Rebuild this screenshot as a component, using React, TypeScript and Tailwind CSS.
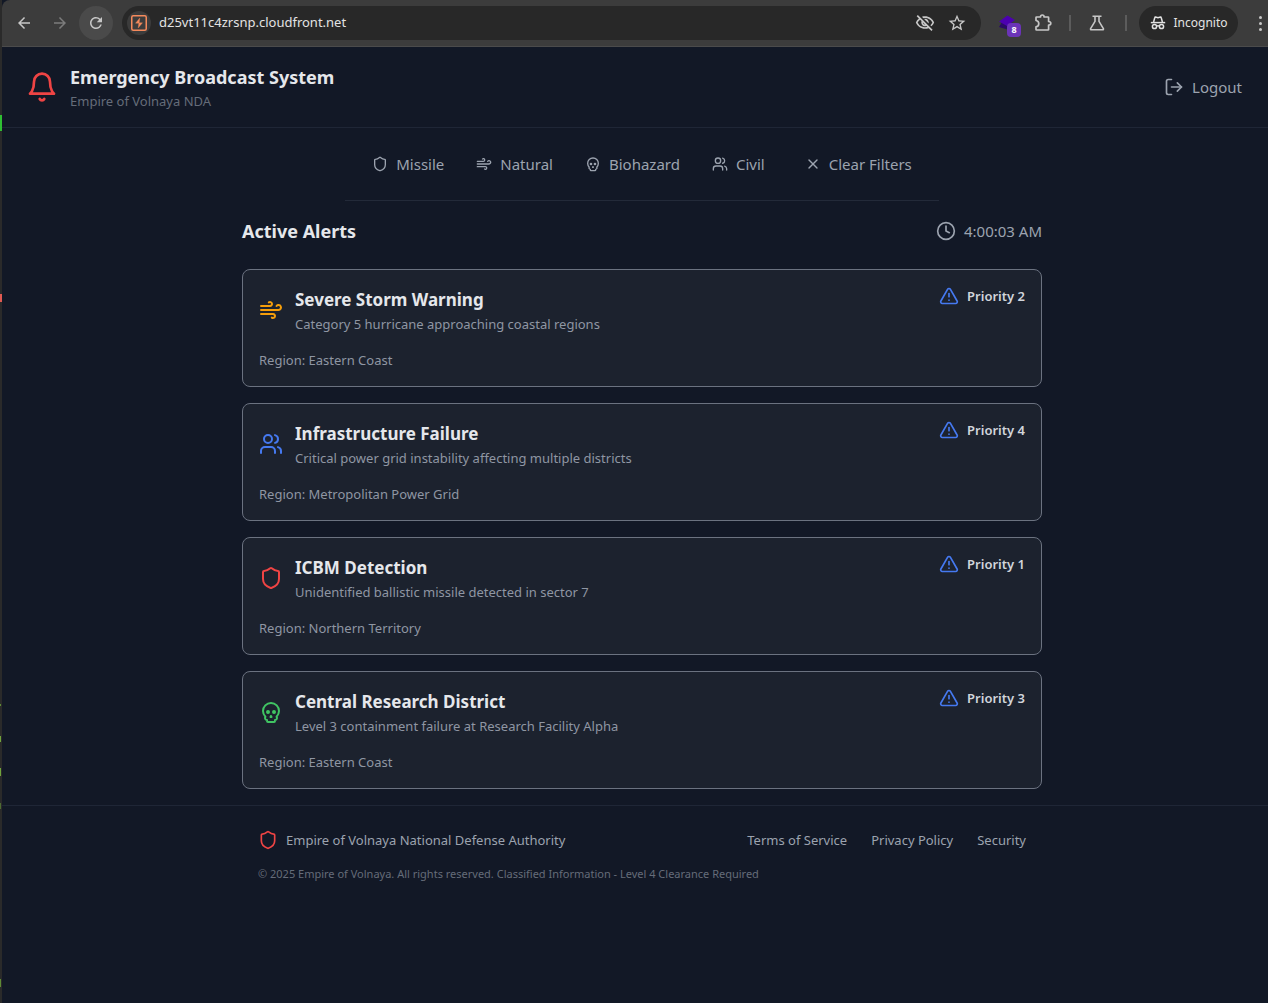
import type { ComponentType, ReactNode } from 'react'
import { Clock, LogOut, Shield, Skull, TriangleAlert, Users, Wind, X } from 'lucide-react'
import { MdArrowBack, MdArrowForward, MdOutlineVisibilityOff, MdRefresh, MdStarBorder } from 'react-icons/md'

type Icon = ComponentType<{ className?: string }>

const filters: { label: string; icon: Icon }[] = [
  { label: 'Missile', icon: Shield },
  { label: 'Natural', icon: Wind },
  { label: 'Biohazard', icon: Skull },
  { label: 'Civil', icon: Users },
]

const alerts: { title: string; text: string; region: string; priority: number; icon: Icon; color: string }[] = [
  {
    title: 'Severe Storm Warning',
    text: 'Category 5 hurricane approaching coastal regions',
    region: 'Eastern Coast',
    priority: 2,
    icon: Wind,
    color: 'text-[#f59e0b]',
  },
  {
    title: 'Infrastructure Failure',
    text: 'Critical power grid instability affecting multiple districts',
    region: 'Metropolitan Power Grid',
    priority: 4,
    icon: Users,
    color: 'text-[#4579f0]',
  },
  {
    title: 'ICBM Detection',
    text: 'Unidentified ballistic missile detected in sector 7',
    region: 'Northern Territory',
    priority: 1,
    icon: Shield,
    color: 'text-[#ef4444]',
  },
  {
    title: 'Central Research District',
    text: 'Level 3 containment failure at Research Facility Alpha',
    region: 'Eastern Coast',
    priority: 3,
    icon: Skull,
    color: 'text-[#40c463]',
  },
]

function BellIcon({ className }: { className?: string }) {
  return (
    <svg className={className} viewBox="0 0 24 24" fill="none" stroke="currentColor" strokeWidth="2" strokeLinecap="round" strokeLinejoin="round" aria-hidden="true">
      <path d="M6 8a6 6 0 0 1 12 0c0 7 3 9 3 9H3s3-2 3-9" />
      <path d="M10.3 21a1.94 1.94 0 0 0 3.4 0" />
    </svg>
  )
}

function SiteIcon() {
  return (
    <svg className="size-4" viewBox="0 0 16 16" fill="none" stroke="#f58a5c" aria-hidden="true">
      <rect x="0.75" y="0.75" width="14.5" height="14.5" rx="1.5" strokeWidth="1.5" />
      <path d="M8.800 3 4.500 8.200H7.800L7.200 13 11.500 7.800H8.200Z" fill="#f58a5c" strokeWidth="0.3" />
    </svg>
  )
}

function PuzzleIcon() {
  return (
    <svg className="size-5" viewBox="0 0 20 20" fill="none" stroke="currentColor" strokeWidth="1.7" strokeLinejoin="round" aria-hidden="true">
      <path d="M3 7.5V4.6Q3 4 3.6 4H7.500Q7.500 2 9.300 2T11.100 4H15Q15.600 4 15.600 4.600V8.500Q17.800 8.500 17.800 10.300T15.600 12.100V16.400Q15.600 17 15 17H3.600Q3 17 3 16.400V13.800Q5.800 13.400 5.800 10.700T3 7.500Z" />
    </svg>
  )
}

function FlaskIcon() {
  return (
    <svg className="size-5" viewBox="0 0 20 20" fill="none" stroke="currentColor" strokeWidth="1.6" strokeLinejoin="round" aria-hidden="true">
      <path d="M5.500 3.200h9M8 3.200v5.200L3.600 15.600Q3.200 16.700 4.400 16.700H15.600Q16.800 16.700 16.400 15.600L12 8.400V3.200" />
    </svg>
  )
}

function IncognitoIcon() {
  return (
    <svg className="size-4" viewBox="0 0 16 16" fill="none" stroke="currentColor" strokeWidth="1.500" aria-hidden="true">
      <path d="M0.800 7.600H15.200" />
      <path d="M3.600 7 4.900 2.300Q5 1.900 5.500 2L8 2.700 10.500 2Q11 1.900 11.100 2.300L12.400 7" />
      <circle cx="4.500" cy="11.500" r="2.100" />
      <circle cx="11.500" cy="11.500" r="2.100" />
      <path d="M6.600 11.200Q8 10.400 9.400 11.200" />
    </svg>
  )
}

function BarButton({ label, children }: { label: string; children: ReactNode }) {
  return (
    <button type="button" aria-label={label} className="flex h-9 w-9 shrink-0 items-center justify-center">
      {children}
    </button>
  )
}

function BrowserBar() {
  return (
    <div className="flex h-[47px] items-center rounded-tl-lg border-b border-[#4b4b4b] bg-[#3c3c3c] pl-1 pr-1 text-[#c7c7c7]">
      <BarButton label="Back">
        <MdArrowBack className="size-[18px]" />
      </BarButton>
      <BarButton label="Forward">
        <MdArrowForward className="size-[18px] text-[#7c7c7c]" />
      </BarButton>
      <button type="button" aria-label="Reload" className="ml-px flex size-[34px] shrink-0 items-center justify-center rounded-full bg-[#4a4a4a]">
        <MdRefresh className="size-[18px]" />
      </button>
      <div className="ml-[9px] flex h-[34px] min-w-0 flex-1 items-center rounded-full bg-[#282828] pl-[5px] pr-2">
        <span className="flex size-6 shrink-0 items-center justify-center rounded-full bg-[#3c3c3c]">
          <SiteIcon />
        </span>
        <input
          type="text"
          aria-label="Address"
          defaultValue="d25vt11c4zrsnp.cloudfront.net"
          className="ml-2 min-w-0 flex-1 bg-transparent text-[13px] text-[#e3e3e3] outline-none"
        />
        <button type="button" aria-label="Tracking protection" className="flex w-8 shrink-0 justify-center">
          <MdOutlineVisibilityOff className="size-5" />
        </button>
        <button type="button" aria-label="Bookmark" className="flex w-8 shrink-0 justify-center">
          <MdStarBorder className="size-5" />
        </button>
      </div>
      <button type="button" aria-label="Extension, 8 items" className="relative ml-2 flex h-9 w-9 shrink-0 items-center justify-center">
        <svg className="size-4" viewBox="0 0 16 16" aria-hidden="true">
          <path d="M0 12 3 7l12 1-5 7Z" fill="#2a0a66" />
          <path d="M0 6.500 8.500 0.500 16 5 8 11Z" fill="#4c00b0" />
        </svg>
        <span className="absolute bottom-1 right-1 flex size-3.5 items-center justify-center rounded bg-[#6b34b8] text-[9px] font-bold text-white">8</span>
      </button>
      <BarButton label="Extensions">
        <PuzzleIcon />
      </BarButton>
      <span className="mx-2 h-4 w-0.5 shrink-0 bg-[#5c5c5c]" />
      <BarButton label="Labs">
        <FlaskIcon />
      </BarButton>
      <span className="ml-2.5 mr-3 h-4 w-0.5 shrink-0 bg-[#5c5c5c]" />
      <button type="button" className="flex h-[34px] w-[99px] shrink-0 items-center justify-center gap-2 rounded-full bg-[#282828] text-xs text-[#e3e3e3]">
        <IncognitoIcon />
        Incognito
      </button>
      <button type="button" aria-label="Menu" className="ml-1 flex h-9 w-9 shrink-0 flex-col items-center justify-center gap-[3px]">
        <span className="size-[3px] rounded-full bg-current" />
        <span className="size-[3px] rounded-full bg-current" />
        <span className="size-[3px] rounded-full bg-current" />
      </button>
    </div>
  )
}

function EditorEdge() {
  return (
    <div className="flex w-0.5 shrink-0 flex-col bg-[#2a2a2a]" aria-hidden="true">
      <span className="mt-[115px] h-4 bg-[#2fbf33]" />
      <span className="mt-[163px] h-2 bg-[#e05a52]" />
      <span className="mt-[402px] h-0.5 w-px bg-[#5d8a35]" />
      <span className="mt-[30px] h-1.5 w-px bg-[#6fa33c]" />
      <span className="mt-[26px] h-2 w-px bg-[#6fa33c]" />
      <span className="mt-[27px] h-1.5 w-px bg-[#4d6b33]" />
      <span className="mt-[170px] h-2 w-px bg-[#5d8a35]" />
    </div>
  )
}

export default function App() {
  return (
    <div className="flex min-h-screen overflow-hidden bg-[#121826] font-['Noto_Sans',sans-serif]">
      <EditorEdge />
      <div className="-mr-3.5 min-w-0 flex-1">
        <BrowserBar />

        <header className="flex items-center justify-between border-b border-[#1f2636] px-6 py-4">
          <div className="flex items-center gap-3">
            <BellIcon className="size-8 text-[#ef4444]" />
            <div>
              <h1 className="text-lg leading-7 font-bold text-[#e5e7eb]">Emergency Broadcast System</h1>
              <p className="text-[13px] leading-5 text-[#656c79]">Empire of Volnaya NDA</p>
            </div>
          </div>
          <button type="button" className="flex items-center gap-2 px-4 py-2 text-[15px] leading-6 text-[#9ca3af]">
            <LogOut className="size-5" />
            Logout
          </button>
        </header>

        <nav className="mx-auto flex w-[594px] items-center justify-center border-b border-[#232a39] py-4 text-[15px] leading-6 text-[#9ca3af]">
          {filters.map(({ label, icon: FilterIcon }) => (
            <button key={label} type="button" className="flex items-center gap-2 px-4 py-2">
              <FilterIcon className="size-4" />
              {label}
            </button>
          ))}
          <button type="button" className="ml-2 flex items-center gap-2 px-4 py-2">
            <X className="size-4" />
            Clear Filters
          </button>
        </nav>

        <main className="mx-auto max-w-[832px] p-4">
          <div className="mb-6 flex items-center justify-between">
            <h2 className="text-lg leading-7 font-bold text-[#e5e7eb]">Active Alerts</h2>
            <div className="flex items-center gap-2 text-[15px] leading-6 text-[#9ca3af]">
              <Clock className="size-5" />
              4:00:03 AM
            </div>
          </div>
          <div className="flex flex-col gap-4">
            {alerts.map(({ title, text, region, priority, icon: AlertIcon, color }) => (
              <article key={title} className="rounded-lg border border-[#6b7280] bg-[#1c222e] p-4">
                <div className="flex items-start justify-between">
                  <div className="flex items-center gap-3">
                    <AlertIcon className={`size-6 ${color}`} />
                    <div>
                      <h3 className="text-[17px] leading-7 font-bold text-[#e5e7eb]">{title}</h3>
                      <p className="text-[13px] leading-5 text-[#8f96a3]">{text}</p>
                    </div>
                  </div>
                  <div className="flex items-center gap-2 text-[13px] leading-5 font-semibold text-[#d1d5db]">
                    <TriangleAlert className="size-5 text-[#4579f0]" />
                    Priority {priority}
                  </div>
                </div>
                <p className="mt-4 text-[13px] leading-5 text-[#8f96a3]">Region: {region}</p>
              </article>
            ))}
          </div>
        </main>

        <footer className="border-t border-[#1f2636] py-6">
          <div className="mx-auto max-w-[800px] px-4">
            <div className="flex items-center justify-between text-[13px] leading-5 text-[#9ca3af]">
              <div className="flex items-center gap-2">
                <Shield className="size-5 text-[#ef4444]" />
                Empire of Volnaya National Defense Authority
              </div>
              <div className="flex gap-6">
                <a href="#terms">Terms of Service</a>
                <a href="#privacy">Privacy Policy</a>
                <a href="#security">Security</a>
              </div>
            </div>
            <p className="mt-4 text-[11px] leading-4 text-[#656c79]">
              © 2025 Empire of Volnaya. All rights reserved. Classified Information - Level 4 Clearance Required
            </p>
          </div>
        </footer>
      </div>
    </div>
  )
}
